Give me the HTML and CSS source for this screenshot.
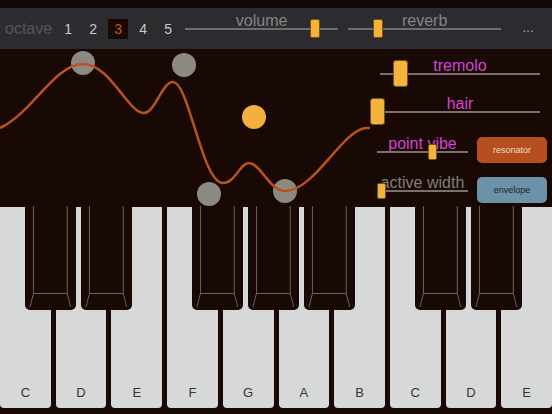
FILE: index.html
```html
<!DOCTYPE html>
<html lang="en">

<head>
  <meta charset="UTF-8" />
  <title>Synth Keys</title>
  <link rel="stylesheet" href="styles.css">
</head>

<body>
  <div class="status"></div>

  <div class="topbar">
    <span class="octave-label">octave</span>
    <div class="octaves">
      <span class="oct">1</span>
      <span class="oct">2</span>
      <span class="oct active">3</span>
      <span class="oct">4</span>
      <span class="oct">5</span>
    </div>
    <div class="hslider volume">
      <div class="hs-label">volume</div>
      <div class="hs-track"><div class="thumb bar-thumb" style="left:125px"></div></div>
    </div>
    <div class="hslider reverb">
      <div class="hs-label">reverb</div>
      <div class="hs-track"><div class="thumb bar-thumb" style="left:25px"></div></div>
    </div>
    <span class="more">...</span>
  </div>

  <div class="stage">
    <svg class="wave" width="370" height="157" viewBox="0 0 370 157">
      <circle cx="83" cy="14" r="12" fill="#8c8882" />
      <circle cx="184" cy="16" r="12" fill="#8c8882" />
      <circle cx="209" cy="145" r="12" fill="#8c8882" />
      <circle cx="285" cy="142" r="12" fill="#8c8882" />
      <circle cx="254" cy="68" r="12" fill="#f2b13c" />
      <path d="M0,79 C32,64 55,15 83,15 C110,15 128,64 144,64 C155,64 162,33 173,33 C189,33 202,134 223,134 C235,134 240,114 249,114 C260,114 270,142 285,142 C315,142 343,79 367,79 L370,79"
        fill="none" stroke="#b8531f" stroke-width="2.5" />
    </svg>

    <div class="panel">
      <div class="pslider wide">
        <div class="ps-label pink">tremolo</div>
        <div class="ps-track"><div class="thumb big" style="left:13px"></div></div>
      </div>
      <div class="pslider wide gap-hair">
        <div class="ps-label pink">hair</div>
        <div class="ps-track"><div class="thumb big" style="left:-10px"></div></div>
      </div>
      <div class="prow first">
        <div class="pslider short">
          <div class="ps-label pink">point vibe</div>
          <div class="ps-track"><div class="thumb small" style="left:51px"></div></div>
        </div>
        <button class="btn resonator">resonator</button>
      </div>
      <div class="prow second">
        <div class="pslider short">
          <div class="ps-label grey">active width</div>
          <div class="ps-track"><div class="thumb small" style="left:0px"></div></div>
        </div>
        <button class="btn envelope">envelope</button>
      </div>
    </div>
  </div>

  <div class="keyboard">
    <div class="whites">
      <div class="wk"><span>C</span></div>
      <div class="wk"><span>D</span></div>
      <div class="wk"><span>E</span></div>
      <div class="wk"><span>F</span></div>
      <div class="wk"><span>G</span></div>
      <div class="wk"><span>A</span></div>
      <div class="wk"><span>B</span></div>
      <div class="wk"><span>C</span></div>
      <div class="wk"><span>D</span></div>
      <div class="wk"><span>E</span></div>
    </div>
    <div class="blacks">
      <div class="bk" style="grid-column:1"><svg viewBox="0 0 51 104" preserveAspectRatio="none"><path d="M8.5,0 V87.5 H42.5 V0 M8.5,87.5 L5,101 M42.5,87.5 L46,101" /></svg></div>
      <div class="bk" style="grid-column:2"><svg viewBox="0 0 51 104" preserveAspectRatio="none"><path d="M8.5,0 V87.5 H42.5 V0 M8.5,87.5 L5,101 M42.5,87.5 L46,101" /></svg></div>
      <div class="bk" style="grid-column:4"><svg viewBox="0 0 51 104" preserveAspectRatio="none"><path d="M8.5,0 V87.5 H42.5 V0 M8.5,87.5 L5,101 M42.5,87.5 L46,101" /></svg></div>
      <div class="bk" style="grid-column:5"><svg viewBox="0 0 51 104" preserveAspectRatio="none"><path d="M8.5,0 V87.5 H42.5 V0 M8.5,87.5 L5,101 M42.5,87.5 L46,101" /></svg></div>
      <div class="bk" style="grid-column:6"><svg viewBox="0 0 51 104" preserveAspectRatio="none"><path d="M8.5,0 V87.5 H42.5 V0 M8.5,87.5 L5,101 M42.5,87.5 L46,101" /></svg></div>
      <div class="bk" style="grid-column:8"><svg viewBox="0 0 51 104" preserveAspectRatio="none"><path d="M8.5,0 V87.5 H42.5 V0 M8.5,87.5 L5,101 M42.5,87.5 L46,101" /></svg></div>
      <div class="bk" style="grid-column:9"><svg viewBox="0 0 51 104" preserveAspectRatio="none"><path d="M8.5,0 V87.5 H42.5 V0 M8.5,87.5 L5,101 M42.5,87.5 L46,101" /></svg></div>
    </div>
  </div>
</body>

</html>
```

FILE: styles.css
```css
body {
  margin: 0;
  width: 552px;
  height: 414px;
  overflow: hidden;
  background: #180904;
  font-family: "Liberation Sans", Arial, sans-serif;
}

.status {
  height: 8px;
  background: #150804;
}

/* top bar */
.topbar {
  height: 41px;
  background: #2c2b30;
  display: flex;
  align-items: center;
  padding-left: 5px;
}

.octave-label {
  font-size: 16px;
  color: #57565b;
  margin-right: 6px;
}

.octaves {
  display: flex;
  gap: 5px;
}

.oct {
  width: 20px;
  height: 20px;
  line-height: 20px;
  text-align: center;
  font-size: 14px;
  color: #c9c9cb;
}

.oct.active {
  background: #190904;
  color: #c4542a;
}

.hslider {
  align-self: stretch;
  width: 153px;
  padding-top: 6px;
  box-sizing: border-box;
}

.volume {
  margin-left: 7px;
}

.reverb {
  margin-left: 10px;
}

.hs-label {
  font-size: 16px;
  line-height: 14px;
  text-align: center;
  color: #858487;
}

.hs-track {
  position: relative;
  height: 2px;
  background: #6d6c70;
}

.more {
  margin-left: 21px;
  font-size: 14px;
  color: #a2a1a4;
  margin-top: -4px;
}

.thumb {
  position: absolute;
  box-sizing: border-box;
  background: #f4b43c;
  border: 1px solid #7a5214;
  border-radius: 3px;
}

.bar-thumb {
  width: 10px;
  height: 19px;
  top: -9px;
  border-radius: 2px;
}

.thumb.big {
  width: 15px;
  height: 27px;
  top: -12.5px;
}

.thumb.small {
  width: 9px;
  height: 16px;
  top: -7px;
  border-radius: 2px;
}

/* wave + controls */
.stage {
  height: 157px;
  display: flex;
}

.wave {
  display: block;
  flex: none;
  overflow: visible;
}

.panel {
  flex: 1;
  display: flex;
  flex-direction: column;
  padding-top: 9.5px;
}

.pslider.wide {
  width: 160px;
  margin-left: 10px;
}

.pslider.gap-hair {
  margin-top: 22px;
}

.ps-label {
  font-size: 16px;
  line-height: 14px;
  text-align: center;
  white-space: nowrap;
}

.pink {
  color: #d444d4;
}

.grey {
  color: #7f7e7e;
}

.ps-track {
  position: relative;
  height: 2px;
  background: #7b716a;
}

.prow {
  display: flex;
  align-items: flex-start;
}

.prow.first {
  margin-top: 24px;
}

.prow.second {
  margin-top: 13px;
}

.pslider.short {
  width: 91px;
  margin-left: 7px;
}

.btn {
  width: 70px;
  height: 26px;
  margin-left: 9px;
  margin-top: 0.5px;
  border: none;
  border-radius: 5px;
  font-family: "Liberation Sans", Arial, sans-serif;
  font-size: 9px;
  padding: 0;
}

.prow.second .btn {
  margin-top: 1px;
}

.resonator {
  background: #b54f1e;
  color: #eadcd4;
}

.envelope {
  background: #6e91aa;
  color: #1f2329;
}

/* keyboard */
.keyboard {
  position: relative;
  height: 208px;
  box-sizing: border-box;
  padding: 1px 0 6px;
}

.whites {
  display: grid;
  grid-template-columns: repeat(10, 1fr);
  gap: 5px;
  height: 100%;
}

.wk {
  background: #d7d8d8;
  border-radius: 0 0 4px 4px;
  display: flex;
  align-items: flex-end;
  justify-content: center;
  padding-bottom: 9px;
  box-sizing: border-box;
}

.wk span {
  font-size: 13px;
  line-height: 13px;
  color: #34343a;
}

.blacks {
  position: absolute;
  top: 0;
  left: 0;
  right: 0;
  display: grid;
  grid-template-columns: repeat(10, 1fr);
  grid-template-rows: 104px;
  gap: 5px;
}

.bk {
  grid-row: 1;
  width: 100%;
  margin-left: 50%;
  background: #180904;
  border-radius: 0 0 5px 5px;
}

.bk svg {
  display: block;
  width: 100%;
  height: 100%;
  fill: none;
  stroke: #6e625c;
  stroke-width: 1;
}

.bk svg path {
  vector-effect: non-scaling-stroke;
}
```
